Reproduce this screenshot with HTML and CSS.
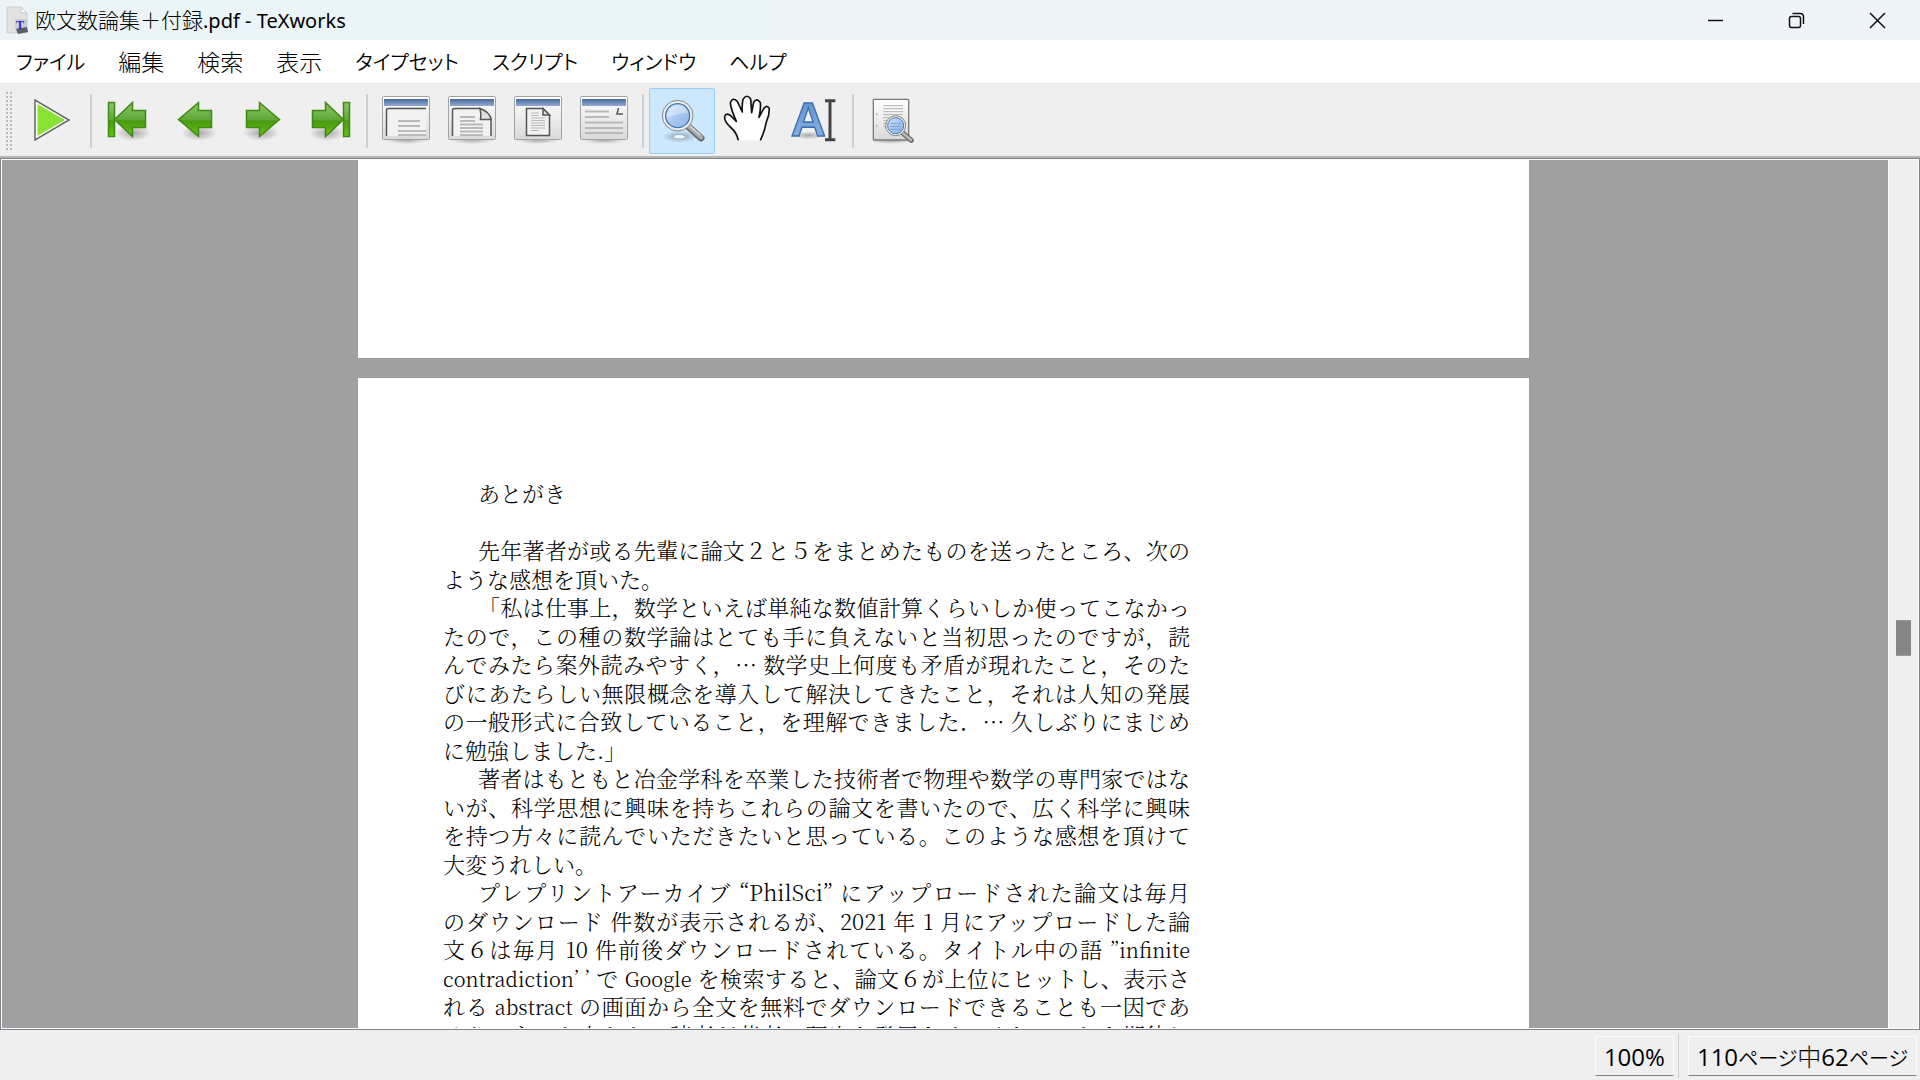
FILE: index.html
```
<!DOCTYPE html>
<html lang="ja">
<head>
<meta charset="utf-8">
<title>欧文数論集＋付録.pdf - TeXworks</title>
<link rel="stylesheet" href="styles.css">
</head>
<body>
<div class="window">
  <header class="titlebar">
    <svg class="app-icon" viewBox="0 0 24 30" aria-hidden="true">
      <path d="M2 2H16L22 8V28H2Z" fill="#e2e2e2" stroke="#cfcfcf"/>
      <path d="M16 2V8H22Z" fill="#fafafa" stroke="#c4c4c4"/>
      <rect x="10" y="14" width="12" height="12" rx="2" fill="#c9ccd6"/>
      <path d="M11 24L22 22L23 27L13 29Z" fill="#5c5f66"/>
      <text x="11" y="24" class="app-letter">T</text>
    </svg>
    <h1 class="title">欧文数論集＋付録<span class="latin">.pdf - TeXworks</span></h1>
    <div class="window-buttons">
      <button type="button" aria-label="最小化"><svg viewBox="0 0 17 17"><path d="M1 8.5H16"/></svg></button>
      <button type="button" aria-label="元に戻す"><svg viewBox="0 0 17 17"><rect x="1.5" y="4.500" width="11" height="11" rx="2"/><path d="M4.500 1.500H12Q15.500 1.500 15.500 5V12"/></svg></button>
      <button type="button" aria-label="閉じる"><svg viewBox="0 0 17 17"><path d="M1 1L16 16M16 1L1 16"/></svg></button>
    </div>
  </header>

  <nav class="menubar">
    <button type="button" class="kana">ファイル</button>
    <button type="button">編集</button>
    <button type="button">検索</button>
    <button type="button">表示</button>
    <button type="button" class="kana">タイプセット</button>
    <button type="button" class="kana">スクリプト</button>
    <button type="button" class="kana">ウィンドウ</button>
    <button type="button" class="kana">ヘルプ</button>
  </nav>

  <svg class="defs" aria-hidden="true">
    <defs>
      <linearGradient id="green" x1="0" y1="0" x2="0" y2="1">
        <stop offset="0" stop-color="#8cc66a"/><stop offset=".5" stop-color="#5fa838"/>
        <stop offset=".55" stop-color="#4a9a10"/><stop offset="1" stop-color="#66c414"/>
      </linearGradient>
      <linearGradient id="blue" x1="0" y1="0" x2="0" y2="1">
        <stop offset="0" stop-color="#456a9f"/><stop offset="1" stop-color="#93abd0"/>
      </linearGradient>
      <linearGradient id="pane" x1="0" y1="0" x2="0" y2="1">
        <stop offset="0" stop-color="#fff"/><stop offset="1" stop-color="#d9d9d9"/>
      </linearGradient>
      <linearGradient id="lens" x1="0" y1="0" x2="1" y2="1">
        <stop offset="0" stop-color="#d4e5fa"/><stop offset=".5" stop-color="#a9c8f0"/><stop offset="1" stop-color="#8fb3e2"/>
      </linearGradient>
      <linearGradient id="letter" x1="0" y1="0" x2="0" y2="1">
        <stop offset="0" stop-color="#5d8fce"/><stop offset="1" stop-color="#8fb4e0"/>
      </linearGradient>
      <radialGradient id="shade">
        <stop offset="0" stop-color="#000" stop-opacity=".3"/><stop offset="1" stop-color="#000" stop-opacity="0"/>
      </radialGradient>
      <g id="frame">
        <ellipse cx="33" cy="52" rx="22" ry="4" fill="url(#shade)"/>
        <rect x="9.500" y="8.500" width="47" height="43" rx="1" fill="url(#pane)" stroke="#a3a3a3"/>
        <rect x="11" y="11" width="44" height="7" fill="url(#blue)"/>
      </g>
    </defs>
  </svg>

  <div class="toolbar" role="toolbar">
    <span class="grip"></span>
    <button type="button" aria-label="タイプセット">
      <svg viewBox="0 0 66 66"><path d="M16 12V52L50 32Z" fill="#fff" stroke="#62685e" stroke-width="1.500"/><path d="M18.500 16V48L46 32Z" fill="#8ae234"/></svg>
    </button>
    <span class="separator"></span>
    <button type="button" aria-label="最初のページ">
      <svg viewBox="0 0 66 66"><ellipse cx="36" cy="45" rx="18" ry="8" fill="url(#shade)"/><g class="arrow"><rect x="11.500" y="14.500" width="6" height="34"/><path d="M17.500 31.500L35.500 14.500V22.500H48.500V39.500H35.500V48.500Z"/></g></svg>
    </button>
    <button type="button" aria-label="前のページ">
      <svg viewBox="0 0 66 66"><ellipse cx="36" cy="45" rx="18" ry="8" fill="url(#shade)"/><path class="arrow" d="M15.500 31.500L35.500 14.500V22.500H48.500V39.500H35.500V48.500Z"/></svg>
    </button>
    <button type="button" aria-label="次のページ">
      <svg viewBox="0 0 66 66"><ellipse cx="32" cy="45" rx="18" ry="8" fill="url(#shade)"/><path class="arrow" d="M50.500 31.500L30.500 14.500V22.500H17.500V39.500H30.500V48.500Z"/></svg>
    </button>
    <button type="button" aria-label="最後のページ">
      <svg viewBox="0 0 66 66"><ellipse cx="32" cy="45" rx="18" ry="8" fill="url(#shade)"/><g class="arrow"><rect x="48.500" y="14.500" width="6" height="34"/><path d="M48.500 31.500L30.500 14.500V22.500H17.500V39.500H30.500V48.500Z"/></g></svg>
    </button>
    <span class="separator"></span>
    <button type="button" aria-label="実寸">
      <svg viewBox="0 0 66 66"><use href="#frame"/><path d="M14 48V22Q14 20.500 16 20.500H53V48Z" fill="#f2f2f2"/><path d="M13.500 48V22Q13.500 20.500 16 20.500H53" class="edge"/><path class="rule" d="M25 33H47M25 38H47M25 43H53M25 47H53"/></svg>
    </button>
    <button type="button" aria-label="幅に合わせる">
      <svg viewBox="0 0 66 66"><use href="#frame"/><path d="M13.500 48V22Q13.500 20.500 16 20.500H41L52 31V48" fill="#f2f2f2" class="edge"/><path class="edge" fill="#e0e0e0" d="M41 20.500Q42.500 26 41.500 31.500H52Q51 24 41 20.500Z"/><path class="rule" d="M21 29H36M21 33H36M21 36.500H44M21 40H44M21 43.500H44M21 47H44"/></svg>
    </button>
    <button type="button" aria-label="ウィンドウに合わせる">
      <svg viewBox="0 0 66 66"><use href="#frame"/><path d="M21.500 20.500H38L44.500 27V47.500H21.500Z" fill="#f2f2f2" class="edge"/><path class="edge" fill="#e0e0e0" d="M38 20.500V27H44.500Z"/><path class="rule thin" d="M26 25H34M26 27.500H34M26 30H40M26 32.500H40M26 35H40M26 37.500H40M26 40H40M26 42.500H34"/></svg>
    </button>
    <button type="button" aria-label="本文幅に合わせる">
      <svg viewBox="0 0 66 66"><use href="#frame"/><path class="rule" d="M14 23.500H38M14 29H38M14 34.500H52M14 40H52M14 45H52"/><path class="edge" d="M47.500 20L46 26H52"/></svg>
    </button>
    <span class="separator"></span>
    <button type="button" class="checked" aria-pressed="true" aria-label="拡大">
      <svg viewBox="30 174 198 198">
        <ellipse cx="122" cy="320" rx="54" ry="18" fill="url(#shade)"/><ellipse cx="121" cy="320" rx="16" ry="5" fill="#f4f9ff"/>
        <path d="M146 288L186 324" stroke="#666" stroke-width="21" stroke-linecap="round"/><path d="M148 288L186 322" stroke="#aaa" stroke-width="14" stroke-linecap="round"/><path d="M148 284L184 316" stroke="#d8d8d8" stroke-width="4"/>
        <circle cx="116" cy="257" r="46" fill="#eee" stroke="#858585" stroke-width="3"/>
        <circle cx="116" cy="257" r="36" fill="url(#lens)" stroke="#4477b6" stroke-width="4"/>
        <path d="M84 262Q84 226 118 225Q144 227 146 248Q116 250 84 262Z" fill="#fff" opacity=".35"/>
      </svg>
    </button>
    <button type="button" aria-label="スクロール">
      <svg viewBox="228 174 198 198"><path d="M298 331Q293 308 277 294Q255 274 257 260Q262 246 276 258L292 274Q275 236 274 218Q280 200 295 214L310 246Q308 226 312 208Q323 190 335 207L338 248L344 216Q354 202 364 218Q366 236 360 262L374 236Q384 222 391 236Q391 256 382 276Q377 304 364 331" fill="#fff" stroke="#111" stroke-width="5" stroke-linejoin="round"/></svg>
    </button>
    <button type="button" aria-label="テキスト選択">
      <svg viewBox="426 174 198 198"><ellipse cx="508" cy="316" rx="46" ry="12" fill="url(#shade)"/><text x="508" y="319" text-anchor="middle" class="tool-letter">A</text><path d="M558 212H589M558 329H589" stroke="#444" stroke-width="9"/><path d="M573 212V328" stroke="#444" stroke-width="9"/></svg>
    </button>
    <span class="separator"></span>
    <button type="button" aria-label="検索">
      <svg viewBox="660 174 198 198">
        <ellipse cx="755" cy="332" rx="64" ry="10" fill="url(#shade)"/>
        <rect x="703" y="208" width="106" height="122" rx="3" fill="url(#pane)" stroke="#7b7b7b" stroke-width="4"/>
        <path d="M713 250V256M713 284V290" stroke="#aaa" stroke-width="4"/>
        <path d="M733 227H792M733 236H792M733 245H792M733 254H792M733 263H792M733 272H792M733 281H792M733 290H770" stroke="#b4b4b4" stroke-width="3"/>
        <path d="M791 309L817 331" stroke="#666" stroke-width="15" stroke-linecap="round"/><path d="M791 309L816 330" stroke="#bbb" stroke-width="8" stroke-linecap="round"/>
        <circle cx="770" cy="287" r="30" fill="#eee" stroke="#858585" stroke-width="3"/>
        <circle cx="770" cy="287" r="24" fill="url(#lens)" stroke="#4477b6" stroke-width="3"/>
        <path d="M755 280H786M753 289H788M755 298H786" stroke="#7da2d2" stroke-width="3"/>
      </svg>
    </button>
  </div>

  <main class="viewer">
    <div class="canvas">
      <section class="page page-end"></section>
      <section class="page page-start">
        <h2>あとがき</h2>
        <p>
          <span class="line">先年著者が或る先輩に論文２と５をまとめたものを送ったところ、次の</span>
          <span class="line">ような感想を頂いた。</span>
        </p>
        <p>
          <span class="line">「私は仕事上，数学といえば単純な数値計算くらいしか使ってこなかっ</span>
          <span class="line">たので，この種の数学論はとても手に負えないと当初思ったのですが，読</span>
          <span class="line">んでみたら案外読みやすく，… 数学史上何度も矛盾が現れたこと，そのた</span>
          <span class="line">びにあたらしい無限概念を導入して解決してきたこと，それは人知の発展</span>
          <span class="line">の一般形式に合致していること，を理解できました．… 久しぶりにまじめ</span>
          <span class="line">に勉強しました.」</span>
        </p>
        <p>
          <span class="line">著者はもともと冶金学科を卒業した技術者で物理や数学の専門家ではな</span>
          <span class="line">いが、科学思想に興味を持ちこれらの論文を書いたので、広く科学に興味</span>
          <span class="line">を持つ方々に読んでいただきたいと思っている。このような感想を頂けて</span>
          <span class="line">大変うれしい。</span>
        </p>
        <p>
          <span class="line">プレプリントアーカイブ “PhilSci” にアップロードされた論文は毎月</span>
          <span class="line">のダウンロード 件数が表示されるが、2021 年 1 月にアップロードした論</span>
          <span class="line">文６は毎月 10 件前後ダウンロードされている。タイトル中の語 <span class="word">”infinite</span></span>
          <span class="line"><span class="word">contradiction’ ’</span> で <span class="word">Google</span> を検索すると、論文６が上位にヒットし、表示さ</span>
          <span class="line">れる <span class="word">abstract</span> の画面から全文を無料でダウンロードできることも一因であ</span>
          <span class="line">ろう．ネット上からの読者が著者の研究を発展させてくれることを期待し</span>
        </p>
      </section>
    </div>
    <div class="scrollbar"><div class="thumb"></div></div>
  </main>

  <footer class="statusbar">
    <span class="cell">100%</span>
    <span class="divider"></span>
    <span class="cell">110<span class="kana">ページ</span><span class="kanji">中</span>62<span class="kana">ページ</span></span>
  </footer>
</div>
</body>
</html>
```
FILE: styles.css
```
* { box-sizing: border-box; }
body {
  margin: 0;
  font-family: "Open Sans", "Noto Sans CJK JP", sans-serif;
  color: #000;
}
button {
  margin: 0;
  padding: 0;
  border: 0;
  background: none;
  font: inherit;
  color: inherit;
}
svg { display: block; fill: none; }
.defs { position: absolute; width: 0; height: 0; }

.window {
  height: 100vh;
  display: flex;
  flex-direction: column;
  background: #efefef;
  overflow: hidden;
}

/* Title bar */
.titlebar {
  flex: none;
  display: flex;
  align-items: center;
  height: 40px;
  padding: 0 2px 0 5px;
  background: linear-gradient(90deg, #ebf4f7 0%, #ebf4f7 40%, #eff3fa 55%);
}
.app-icon { width: 24px; height: 30px; }
.app-letter { font: bold 12px "Liberation Serif", serif; fill: #2a2ad0; }
.title {
  flex: 1;
  margin: 0 0 0 6px;
  font-size: 21px;
  font-weight: 300;
  line-height: 40px;
  font-family: "Noto Sans CJK JP", sans-serif;
}
.latin { font-family: "Noto Sans", sans-serif; font-size: 20px; font-weight: 400; }
.window-buttons { display: flex; height: 100%; }
.window-buttons button { width: 81px; display: grid; place-items: center; }
.window-buttons svg { width: 17px; height: 17px; stroke: #111; stroke-width: 1.5; }

/* Menu bar */
.menubar {
  flex: none;
  display: flex;
  gap: 33px;
  height: 43px;
  padding: 0 0 1px 16px;
  background: #fff;
  font-family: "Noto Sans CJK JP", sans-serif;
  font-size: 23px;
  font-weight: 300;
  font-feature-settings: "palt";
}
.kana { font-size: 20px; font-weight: 350; }
.kanji { font-weight: 300; }

/* Toolbar */
.toolbar {
  flex: none;
  display: flex;
  align-items: center;
  height: 75px;
  padding: 2px 0 0 6px;
  border-top: 1px solid #e8e8e8;
  border-bottom: 2px solid #b4b6b5;
}
.grip {
  width: 7px;
  height: 58px;
  margin-right: 6px;
  background: radial-gradient(circle at 1px 1px, #b8b8b8 1px, transparent 1px) 0 0 / 4px 4px;
}
.toolbar button { width: 66px; height: 66px; border-radius: 2px; }
.toolbar svg { width: 66px; height: 66px; }
.toolbar .checked { background: #cce8ff; box-shadow: inset 0 0 0 1px #99d1ff; }
.separator { width: 2px; height: 54px; margin: 0 5px; background: #cfcfcf; }
.arrow { fill: url(#green); stroke: #3f8a12; stroke-width: 1.5; }
.edge { stroke: #555; stroke-width: 1.5; }
.rule { stroke: #b9b9b9; stroke-width: 2; }
.thin { stroke-width: 1; }
.tool-letter {
  font: bold 146px "Liberation Sans", sans-serif;
  fill: url(#letter);
  stroke: #3b6fb0;
  stroke-width: 4;
}

/* Document view */
.viewer {
  flex: 1;
  min-height: 0;
  display: flex;
  border: 1px solid #7f838c;
  background: #fff;
}
.canvas {
  flex: 1;
  display: flex;
  flex-direction: column;
  align-items: center;
  gap: 20px;
  margin: 1px;
  padding-right: 3px;
  background: #a0a0a0;
  overflow: hidden;
}
.page { flex: none; width: 1171px; background: #fff; }
.page-end { height: 198px; }
.page-start {
  padding: 101px 339px 0 85px;
  font-family: "Noto Serif CJK JP", "Liberation Serif", serif;
  font-size: 22px;
  font-weight: 300;
  line-height: 28px;
}
.page-start h2 {
  margin: 0 0 29px;
  font-size: 22px;
  font-weight: 300;
  text-indent: 35px;
}
.page-start p { margin: 0; }
.line { display: block; text-align-last: justify; white-space: nowrap; }
.line:first-child { text-indent: 35px; }
.line:nth-child(even) { line-height: 29px; }
p:not(:last-child) .line:last-child { text-align-last: left; }
.word { font-size: 20px; line-height: 1; }

.scrollbar {
  flex: none;
  width: 29px;
  margin: 1px 1px 1px 0;
  padding: 460px 7px 0;
  background: #efefef;
}
.thumb { height: 36px; background: #858585; border: solid #9c9c9c; border-width: 1px 0; }

/* Status bar */
.statusbar {
  flex: none;
  display: flex;
  justify-content: flex-end;
  align-items: center;
  height: 50px;
  padding: 2px 3px 0 0;
  font-size: 24px;
  font-weight: 400;
  font-feature-settings: "palt";
}
.cell {
  height: 40px;
  padding: 0 8px;
  line-height: 40px;
  border: 1px solid #fafafa;
  border-bottom: 1px solid #808080;
}
.divider { width: 1px; height: 44px; margin: 0 9px 0 4px; background: #d0d0d0; }
```
